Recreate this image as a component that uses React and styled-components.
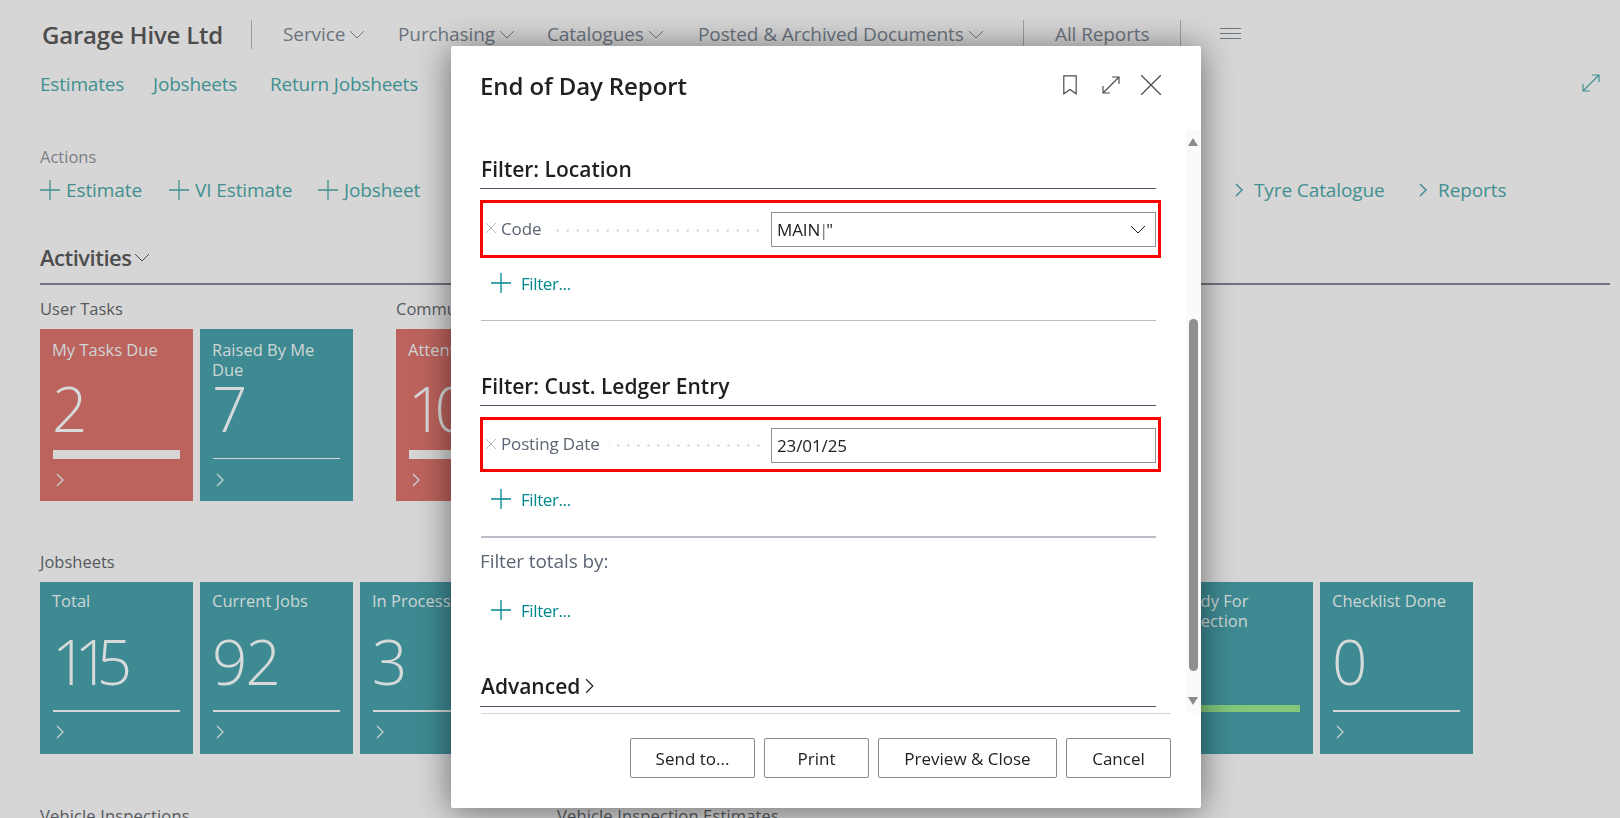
import React from "react";
import styled, { createGlobalStyle } from "styled-components";

const font = `"Open Sans", "Noto Sans", "Liberation Sans", sans-serif`;
const Global = createGlobalStyle`
  html, body { margin: 0; padding: 0; height: 818px; overflow: hidden; background: #d6d6d6; }
  * { box-sizing: border-box; }
  body { font-family: ${font}; }
`;

const Page = styled.div`
  width: 1620px; height: 818px; overflow: hidden; background: #d6d6d6; padding: 0 10px 0 40px;
`;
const TopBar = styled.div`
  height: 68px; display: flex; align-items: center; margin-left: 2px;
`;
const Brand = styled.div`
  width: 209px; font-size: 24px; font-weight: 600; color: #4d4d4d; letter-spacing: -0.2px; white-space: nowrap;
`;
const VLine = styled.div`
  width: 1px; height: 29px; background: #9a9da1; margin: 0 ${(p) => p.$r || 31}px 0 0;
`;
const NavItem = styled.div`
  width: ${(p) => p.$w}px; flex: none; display: flex; align-items: center; gap: 4px;
  font-size: 19px; color: #6b7480; white-space: nowrap; letter-spacing: -0.1px;
`;
const LinkRow = styled.div`
  height: 32px; display: flex; align-items: center;
`;
const PageLink = styled.div`
  width: ${(p) => p.$w}px; font-size: 19px; color: #41908f; letter-spacing: -0.2px; white-space: nowrap;
`;
const ExpandSlot = styled.div`
  margin: -2px 9px 0 auto; display: flex; color: #41908f;
`;
const ActionsLabel = styled.div`
  margin-top: 46px; font-size: 16.5px; line-height: 22px; color: #7b7f86;
`;
const ActionRow = styled.div`
  margin-top: 6px; height: 32px; display: flex; align-items: center;
`;
const Action = styled.div`
  flex: none; width: ${(p) => p.$w}px; display: flex; align-items: center; gap: ${(p) => p.$g ?? 6}px;
  font-size: 19px; color: #41908f; letter-spacing: -0.1px; white-space: nowrap;
`;
const SectionHead = styled.div`
  margin-top: 35px; height: 32px; display: flex; align-items: center; gap: 3px;
  font-size: 22px; font-weight: 600; color: #4d4d4d; letter-spacing: -0.5px;
`;
const SectionRule = styled.div`
  height: 2px; background: #6d747c; margin-top: 10px;
`;
const Groups = styled.div`
  display: flex; gap: 43px; margin-top: 13px;
`;
const Group = styled.div`
  display: flex; flex-direction: column;
`;
const GroupLabel = styled.div`
  font-size: 16.5px; line-height: 22px; height: 22px; color: #55595e; white-space: nowrap;
`;
const Tiles = styled.div`
  display: flex; gap: 7px; margin-top: 9px;
`;
const Tile = styled.div`
  width: 153px; height: 172px; flex: none; padding: ${(p) => (p.$second ? 9 : 11)}px 13px 0 12px; overflow: hidden;
  background: ${(p) => (p.$red ? "#bd635d" : "#3e8a92")}; display: flex; flex-direction: column;
`;
const TileTitle = styled.div`
  font-size: 16.5px; line-height: 20px; height: 40px; color: #cfd6d6;
`;
const TileValue = styled.div`
  font-size: 62px; line-height: 62px; height: 62px; margin-top: ${(p) => (p.$second ? -1 : -3)}px; font-weight: 300; color: #d6dada;
  letter-spacing: ${(p) => p.$ls ?? -2}px; white-space: nowrap;
`;
const BarZone = styled.div`
  height: 9px; margin: ${(p) => (p.$second ? 11 : 11)}px 0 0 1px; display: flex; align-items: flex-end;
`;
const Bar = styled.div`
  width: 127px; height: ${(p) => p.$h}px; background: ${(p) => p.$c || "#d6d6d6"};
`;
const TileChevron = styled.div`
  margin: ${(p) => (p.$second ? 13 : 14)}px 0 0 4px; display: flex; color: #cfd6d6;
`;
const Row2Gap = styled.div`
  height: 50px;
`;
const BottomGroups = styled.div`
  display: flex; margin-top: 51px;
`;
const BottomLabel = styled(GroupLabel)`
  width: ${(p) => p.$w}px; letter-spacing: 0.15px;
`;

const Modal = styled.div`
  position: fixed; left: 451px; top: 46px; width: 750px; height: 762px; background: #fff; border-radius: 2px;
  box-shadow: 0 3px 34px rgba(0, 0, 0, 0.5); display: flex; flex-direction: column; overflow: hidden;
`;
const ModalHead = styled.div`
  height: 84px; flex: none; display: flex; align-items: center; padding: 0 40px 0 29px;
`;
const ModalTitle = styled.div`
  font-size: 24px; font-weight: 600; color: #212121; letter-spacing: -0.1px; flex: 1; padding-bottom: 6px;
`;
const ModalIcons = styled.div`
  display: flex; gap: 20px; align-items: center; color: #4d4d4d; padding-bottom: 6px;
`;
const BookmarkSlot = styled.div`
  display: flex; margin-right: 4px;
`;
const ModalBody = styled.div`
  flex: 1; padding: 0 45px 0 30px;
`;
const FilterHead = styled.div`
  font-size: 21px; line-height: 28px; font-weight: 600; color: #1f1f1f; margin-left: -1px; padding-left: 1px;
  border-bottom: 1px solid #4b5563; padding-bottom: 6px; margin-top: ${(p) => p.$mt}px; display: flex; align-items: center; gap: 5px;
  height: ${(p) => p.$h || 33}px;
`;
const Highlight = styled.div`
  margin: 11px -5px 0 -1px; height: ${(p) => p.$h}px; border: 3px solid #f00; padding: 0 2px 0 3px; display: flex; align-items: center;
`;
const ClearX = styled.div`
  display: flex; color: #6b7280; width: 15px; flex: none; margin-top: -2px;
`;
const FieldLabel = styled.div`
  font-size: 17px; color: #5b6573; letter-spacing: -0.15px; flex: none; margin-top: -2px;
`;
const Leader = styled.div`
  flex: 1; height: 3px; margin: 2px 8px 0 9px;
  background-image: radial-gradient(circle, #c9c9c9 1px, transparent 1.2px);
  background-size: 10px 3px; background-position: right center;
`;
const Input = styled.div`
  width: 385px; height: 35px; flex: none; border: 1px solid #8d9199; display: flex; align-items: center; padding: 0 9px 0 5px;
  font-size: 17px; color: #212121; letter-spacing: -0.1px; margin-top: ${(p) => p.$mt || 0}px;
`;
const Caret = styled.span`
  margin: 0 -2px 0 -1px; font-weight: 300;
`;
const InputChevron = styled.div`
  margin-left: auto; display: flex;
`;
const AddFilter = styled.div`
  display: flex; align-items: center; gap: 10px; color: #00868c; font-size: 17px; letter-spacing: -0.4px;
  margin: ${(p) => p.$mt}px 0 0 10px; height: 20px;
`;
const Divider = styled.div`
  height: ${(p) => p.$h || 1}px; background: #b9bdc5; margin-top: ${(p) => p.$mt}px;
`;
const SubLabel = styled.div`
  margin-top: 11px; margin-left: -1px; font-size: 19px; line-height: 24px; color: #5b6573; letter-spacing: -0.1px;
`;
const ModalFooter = styled.div`
  flex: none; height: 95px; margin: 0 30px; border-top: 1px solid #d5d5d5; display: flex; justify-content: flex-end; gap: 9px; padding-top: 24px;
`;
const Button = styled.div`
  width: ${(p) => p.$w}px; height: 40px; border: 1px solid #8a8a8a; border-radius: 2px; background: #fff;
  display: flex; align-items: center; justify-content: center; font-size: 17px; color: #212121;
`;
const ScrollTrack = styled.div`
  position: absolute; right: 0; top: 84px; width: 15px; height: 583px; background: #fafafa;
`;
const ScrollThumb = styled.div`
  position: absolute; left: 3px; top: 189px; width: 9px; height: 352px; background: #8f8f8f; border-radius: 5px;
`;
const ScrollArrow = styled.div`
  position: absolute; left: 2px; width: 0; height: 0; border-left: 5.5px solid transparent; border-right: 5.5px solid transparent;
  ${(p) => (p.$up ? "top: 8px; border-bottom: 8px solid #8a8a8a;" : "bottom: 8px; border-top: 8px solid #8a8a8a;")}
`;

const Chevron = ({ s = 16, w = 1 }) => (
  <svg width={s} height={s} viewBox="0 0 16 16" fill="none" stroke="currentColor" strokeWidth={w}><path d="M1 5l7 7 7-7" /></svg>
);
const ChevronRight = ({ w = 8, h = 14, sw = 1.2 }) => (
  <svg width={w} height={h} viewBox="0 0 8 14" fill="none" stroke="currentColor" strokeWidth={sw}><path d="M1 1l6 6-6 6" /></svg>
);
const Plus = ({ s = 20, sw = 1.3 }) => (
  <svg width={s} height={s} viewBox="0 0 20 20" fill="none" stroke="currentColor" strokeWidth={sw}><path d="M10 0v20M0 10h20" /></svg>
);
const Expand = ({ s = 20 }) => (
  <svg width={s} height={s} viewBox="0 0 20 20" fill="none" stroke="currentColor" strokeWidth="1.2"><path d="M2 18L18 2M11 2h7v7M2 11v7h7" /></svg>
);
const Cross = ({ s = 20, sw = 1.3 }) => (
  <svg width={s} height={s} viewBox="0 0 20 20" fill="none" stroke="currentColor" strokeWidth={sw}><path d="M0 0l20 20M20 0L0 20" /></svg>
);
const Bookmark = () => (
  <svg width="14" height="20" viewBox="0 0 14 20" fill="none" stroke="currentColor" strokeWidth="1.2"><path d="M.8.8h12.4v18L7 14.5.8 18.8z" /></svg>
);
const Burger = () => (
  <svg width="21" height="12" viewBox="0 0 21 12" fill="none" stroke="#6b7480"><path d="M0 .5h21M0 5.5h21M0 10.5h21" /></svg>
);

const TileCard = ({ title, value, red, barH = 2, barC, second, ls }) => (
  <Tile $red={red} $second={second}>
    <TileTitle>{title}</TileTitle>
    <TileValue $second={second} $ls={ls}>{value}</TileValue>
    <BarZone $second={second}><Bar $h={barH} $c={barC} /></BarZone>
    <TileChevron $second={second}><ChevronRight /></TileChevron>
  </Tile>
);

const AddFilterRow = ({ mt }) => (
  <AddFilter $mt={mt}><Plus /><span>Filter...</span></AddFilter>
);

export default function App() {
  return (
    <Page>
      <Global />
      <TopBar>
        <Brand>Garage Hive Ltd</Brand>
        <VLine />
        <NavItem $w={115}>Service<Chevron /></NavItem>
        <NavItem $w={149}>Purchasing<Chevron /></NavItem>
        <NavItem $w={151}>Catalogues<Chevron /></NavItem>
        <NavItem $w={325}>Posted &amp; Archived Documents<Chevron /></NavItem>
        <VLine />
        <NavItem $w={125}>All Reports</NavItem>
        <VLine $r={39} />
        <Burger />
      </TopBar>
      <LinkRow>
        <PageLink $w={113}>Estimates</PageLink>
        <PageLink $w={117}>Jobsheets</PageLink>
        <PageLink $w={180}>Return Jobsheets</PageLink>
        <ExpandSlot><Expand /></ExpandSlot>
      </LinkRow>
      <ActionsLabel>Actions</ActionsLabel>
      <ActionRow>
        <Action $w={129}><Plus />Estimate</Action>
        <Action $w={149}><Plus />VI Estimate</Action>
        <Action $w={917}><Plus />Jobsheet</Action>
        <Action $w={184} $g={11}><ChevronRight w={8} h={14} sw={1.5} />Tyre Catalogue</Action>
        <Action $w={100} $g={11}><ChevronRight w={8} h={14} sw={1.5} />Reports</Action>
      </ActionRow>
      <SectionHead>Activities<Chevron /></SectionHead>
      <SectionRule />
      <Groups>
        <Group>
          <GroupLabel>User Tasks</GroupLabel>
          <Tiles>
            <TileCard red title="My Tasks Due" value="2" barH={9} />
            <TileCard title="Raised By Me Due" value="7" barH={1} />
          </Tiles>
        </Group>
        <Group>
          <GroupLabel>Communications</GroupLabel>
          <Tiles>
            <TileCard red title="Attention" value="10" barH={9} ls={-9} />
          </Tiles>
        </Group>
      </Groups>
      <Row2Gap />
      <Group>
        <GroupLabel>Jobsheets</GroupLabel>
        <Tiles>
          <TileCard title="Total" value="115" second ls={-13} />
          <TileCard title="Current Jobs" value="92" second />
          <TileCard title="In Process" value="3" second />
          <TileCard title="On Hold" value="0" second />
          <TileCard title="Awaiting Parts" value="0" second />
          <TileCard title="Parts Ready" value="0" second />
          <TileCard title="Finished" value="0" second />
          <TileCard title="Ready For Collection" value="" second barH={7} barC="#82c87a" />
          <TileCard title="Checklist Done" value="0" second />
        </Tiles>
      </Group>
      <BottomGroups>
        <BottomLabel $w={517}>Vehicle Inspections</BottomLabel>
        <BottomLabel $w={400}>Vehicle Inspection Estimates</BottomLabel>
      </BottomGroups>

      <Modal>
        <ModalHead>
          <ModalTitle>End of Day Report</ModalTitle>
          <ModalIcons><BookmarkSlot><Bookmark /></BookmarkSlot><Expand /><Cross /></ModalIcons>
        </ModalHead>
        <ModalBody>
          <FilterHead $mt={26}>Filter: Location</FilterHead>
          <Highlight $h={58}>
            <ClearX><Cross s={10} sw={1} /></ClearX>
            <FieldLabel>Code</FieldLabel>
            <Leader />
            <Input>MAIN<Caret>|</Caret>"<InputChevron><Chevron /></InputChevron></Input>
          </Highlight>
          <AddFilterRow mt={15} />
          <Divider $mt={27} />
          <FilterHead $mt={52}>Filter: Cust. Ledger Entry</FilterHead>
          <Highlight $h={55}>
            <ClearX><Cross s={10} sw={1} /></ClearX>
            <FieldLabel>Posting Date</FieldLabel>
            <Leader />
            <Input $mt={2}>23/01/25</Input>
          </Highlight>
          <AddFilterRow mt={17} />
          <Divider $h={2} $mt={27} />
          <SubLabel>Filter totals by:</SubLabel>
          <AddFilterRow mt={27} />
          <FilterHead $mt={51} $h={36}>Advanced<ChevronRight w={9} h={16} sw={1} /></FilterHead>
        </ModalBody>
        <ModalFooter>
          <Button $w={125}>Send to...</Button>
          <Button $w={105}>Print</Button>
          <Button $w={179}>Preview &amp; Close</Button>
          <Button $w={105}>Cancel</Button>
        </ModalFooter>
        <ScrollTrack>
          <ScrollArrow $up />
          <ScrollThumb />
          <ScrollArrow />
        </ScrollTrack>
      </Modal>
    </Page>
  );
}
